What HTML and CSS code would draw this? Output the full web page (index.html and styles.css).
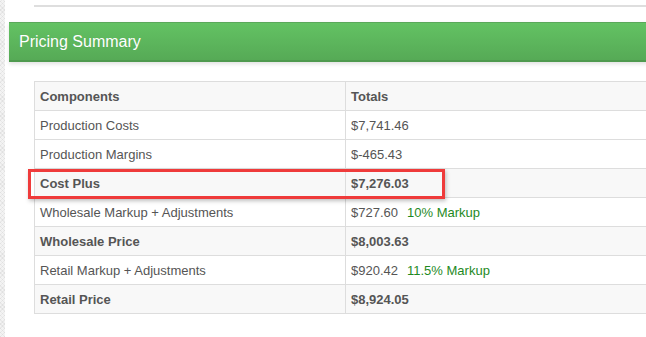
FILE: index.html
```html
<!DOCTYPE html>
<html>
<head>
<meta charset="utf-8">
<link rel="stylesheet" href="styles.css">
</head>
<body>
<div class="page">
  <div class="strip"></div>
  <div class="main">
    <div class="rule"></div>
    <div class="panel-head">Pricing Summary</div>
    <div class="table-wrap">
      <table class="summary">
        <thead>
          <tr><th class="c1">Components</th><th>Totals</th></tr>
        </thead>
        <tbody>
          <tr><td>Production Costs</td><td>$7,741.46</td></tr>
          <tr><td>Production Margins</td><td>$-465.43</td></tr>
          <tr class="total"><td>Cost Plus</td><td>$7,276.03</td></tr>
          <tr><td>Wholesale Markup + Adjustments</td><td>$727.60<span class="note">10% Markup</span></td></tr>
          <tr class="total"><td>Wholesale Price</td><td>$8,003.63</td></tr>
          <tr><td>Retail Markup + Adjustments</td><td>$920.42<span class="note">11.5% Markup</span></td></tr>
          <tr class="total"><td>Retail Price</td><td>$8,924.05</td></tr>
        </tbody>
      </table>
      <div class="highlight"></div>
    </div>
  </div>
</div>
</body>
</html>
```

FILE: styles.css
```css
html, body {
  margin: 0;
  padding: 0;
  background: #fff;
  overflow: hidden;
}
.page {
  display: flex;
  width: 646px;
  height: 337px;
  overflow: hidden;
  font-family: "Liberation Sans", Arial, sans-serif;
}
.strip {
  flex: 0 0 5px;
  background-color: #f3f3f3;
  background-image:
    repeating-linear-gradient(45deg, rgba(0,0,0,0.04) 0 1px, transparent 1px 3px),
    repeating-linear-gradient(-45deg, rgba(0,0,0,0.04) 0 1px, transparent 1px 3px);
}
.main {
  flex: 1 1 auto;
  padding-left: 4px;
  min-width: 0;
}
.rule {
  margin: 5px 0 0 25px;
  width: 700px;
  border-top: 2px solid #dedede;
}
.panel-head {
  margin-top: 15px;
  width: 700px;
  height: 37px;
  box-sizing: content-box;
  border-top: 1px solid #5aa85a;
  border-bottom: 2px solid #4f9a4f;
  background: linear-gradient(#63c263, #56aa56);
  box-shadow: 0 2px 4px rgba(0,0,0,0.12);
  color: #fff;
  font-size: 16px;
  line-height: 37px;
  padding-left: 10px;
  text-shadow: 0 0 1px rgba(0,0,0,0.1);
}
.table-wrap {
  position: relative;
  margin: 19px 0 0 25px;
  width: 700px;
}
.summary {
  width: 700px;
  border-collapse: collapse;
  border-top: 1px solid #dddddd;
  border-left: 1px solid #dddddd;
  font-size: 13px;
  color: #555;
}
.summary th, .summary td {
  height: 29px;
  padding: 0 5px;
  text-align: left;
  border-bottom: 1px solid #dddddd;
  box-sizing: border-box;
}
.summary th {
  background: #f8f8f8;
  font-weight: bold;
}
.summary .c1,
.summary td:first-child {
  width: 311px;
  border-right: 1px solid #dddddd;
}
.summary tr.total td {
  background: #f8f8f8;
  font-weight: bold;
}
.note {
  margin-left: 9px;
  color: #1f8a1f;
}
.highlight {
  position: absolute;
  left: -6px;
  top: 88px;
  width: 411px;
  height: 24px;
  border: 3px solid #ef3b3b;
  box-shadow: 1px 2px 4px rgba(0,0,0,0.25);
}
```
